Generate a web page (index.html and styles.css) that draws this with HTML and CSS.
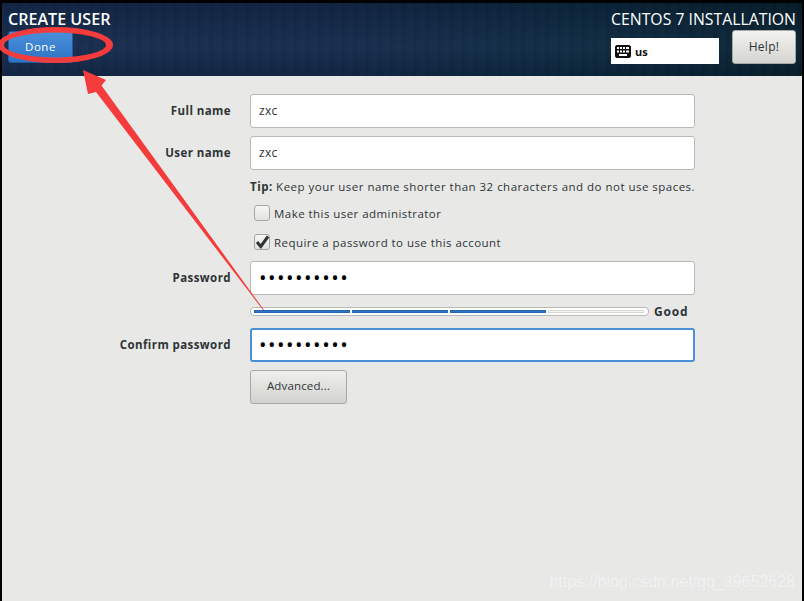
FILE: index.html
```html
<!DOCTYPE html>
<html lang="en">
<head>
<meta charset="utf-8">
<title>Create User</title>
<link rel="stylesheet" href="styles.css">
</head>
<body>
<div class="frame">
  <header class="top">
    <div class="top-left">
      <h1 class="title">CREATE USER</h1>
      <button class="done" type="button">Done</button>
    </div>
    <div class="top-right">
      <div class="product">CENTOS 7 INSTALLATION</div>
      <div class="top-controls">
        <div class="kb">
          <svg class="kb-icon" width="16" height="13" viewBox="0 0 16 13">
            <rect x="0.5" y="0.5" width="15" height="12" rx="1.5" fill="#111" stroke="#111"/>
            <g fill="#fff">
              <rect x="2" y="2" width="2" height="2"/><rect x="5" y="2" width="2" height="2"/><rect x="8" y="2" width="2" height="2"/><rect x="11" y="2" width="3" height="2"/>
              <rect x="2" y="5.500" width="2" height="2"/><rect x="5" y="5.500" width="2" height="2"/><rect x="8" y="5.500" width="2" height="2"/><rect x="11" y="5.500" width="3" height="2"/>
              <rect x="4" y="9" width="8" height="2"/>
            </g>
          </svg>
          <span class="kb-label">us</span>
        </div>
        <button class="help" type="button">Help!</button>
      </div>
    </div>
  </header>
  <main class="form">
    <label class="lbl row-a">Full name</label>
    <div class="field row-a">zxc</div>
    <label class="lbl row-b">User name</label>
    <div class="field row-b">zxc</div>
    <p class="tip"><b>Tip:</b> Keep your user name shorter than 32 characters and do not use spaces.</p>
    <div class="check check-a"><span class="box"></span><span>Make this user administrator</span></div>
    <div class="check check-b">
      <span class="box"><svg width="16" height="16" viewBox="0 0 16 16"><path d="M3 8 L6.800 12.500 L14 2.500" fill="none" stroke="#2e3436" stroke-width="3"/></svg></span>
      <span>Require a password to use this account</span>
    </div>
    <label class="lbl row-c">Password</label>
    <div class="field dots row-c">••••••••••</div>
    <div class="meter-row">
      <div class="meter"><i class="seg on"></i><i class="seg on"></i><i class="seg on"></i><i class="seg"></i></div>
      <span class="good">Good</span>
    </div>
    <label class="lbl row-d">Confirm password</label>
    <div class="field dots focus row-d">••••••••••</div>
    <button class="advanced" type="button">Advanced...</button>
  </main>
  <div class="watermark">https://blog.csdn.net/qq_39652628</div>
  <svg class="markup" width="804" height="601" viewBox="0 0 804 601">
    <path fill-rule="evenodd" fill="#f53c3c" d="M-2 45 A57.500 18 0 1 1 113 45 A57.500 18 0 1 1 -2 45 Z M4 45 A51 12.500 0 1 0 106 45 A51 12.500 0 1 0 4 45 Z"/>
    <path d="M83 70 L106 80 L101.500 85.500 L264 310 L263 310 L96 92 L88 94 Z" fill="#f53c3c"/>
  </svg>
</div>
</body>
</html>
```
FILE: styles.css
```css
* { box-sizing: border-box; }
html, body { margin: 0; padding: 0; height: 100%; overflow: hidden; }
body { background: #000; font-family: "Open Sans", "Noto Sans", sans-serif; }
.frame {
  position: relative;
  width: 804px;
  height: 601px;
  padding: 3px 2px 0;
  background: #000;
  display: flex;
  flex-direction: column;
}
.top {
  height: 73px;
  flex: none;
  display: flex;
  justify-content: space-between;
  padding: 0 6px;
  color: #fff;
  background:
    repeating-linear-gradient(90deg, rgba(255,255,255,.01) 0 3px, rgba(0,0,0,.02) 3px 7px, rgba(255,255,255,.006) 7px 12px),
    linear-gradient(180deg, rgba(0,0,0,.12), rgba(255,255,255,.03) 60%, rgba(0,0,0,.1)),
    linear-gradient(90deg, #13294b 0%, #12284a 40%, #0b2740 70%, #07202f 100%);
}
.top-left { width: 200px; }
.title {
  margin: 7px 0 0;
  font-size: 16.100px;
  line-height: 18px;
  font-weight: 600;
  white-space: nowrap;
}
.done {
  display: block;
  width: 65px;
  height: 32px;
  margin-top: 3px;
  padding: 0 0 2px;
  border: 1px solid #1d5ea8;
  border-radius: 3px;
  color: #fff;
  font: 400 11.500px "Open Sans", sans-serif;
  letter-spacing: .5px;
  background: linear-gradient(180deg, #4a8fdb, #2f74c4);
}
.top-right { width: 240px; display: flex; flex-direction: column; align-items: flex-end; }
.product {
  margin-top: 7px;
  font-size: 15.800px;
  line-height: 18px;
  white-space: nowrap;
}
.top-controls { display: flex; align-items: flex-end; gap: 13px; margin-top: 2px; }
.kb {
  width: 108px;
  height: 26px;
  background: #fff;
  color: #111;
  display: flex;
  align-items: center;
  padding-left: 4px;
  gap: 4px;
}
.kb-label { font-size: 11px; font-weight: 700; }
.help {
  width: 64px;
  height: 34px;
  padding: 0 0 2px;
  border: 1px solid #a8a8a4;
  border-radius: 3px;
  color: #2e3436;
  font: 400 12px "Open Sans", sans-serif;
  letter-spacing: .3px;
  background: linear-gradient(180deg, #f2f2f0, #d4d4d0);
}
.form {
  flex: 1;
  background: #e8e8e7;
  display: grid;
  grid-template-columns: 229px 445px;
  column-gap: 19px;
  grid-template-rows: 34px 8px 34px 9px 16px 10px 16px 13px 16px 11px 34px 12px 9px 12px 34px 8px 34px;
  align-content: start;
  padding-top: 18px;
  color: #2e3436;
  font-size: 11.500px;
}
.lbl {
  grid-column: 1;
  justify-self: end;
  align-self: center;
  padding-bottom: 2px;
  font-weight: 700;
  letter-spacing: .42px;
  white-space: nowrap;
}
.field {
  grid-column: 2;
  background: #fff;
  border: 1px solid #b8b8b4;
  border-radius: 3px;
  display: flex;
  align-items: center;
  padding: 0 0 2px 8px;
  color: #2e3436;
  font-size: 12px;
  letter-spacing: .3px;
}
.row-a { grid-row: 1; }
.row-b { grid-row: 3; }
.row-c { grid-row: 11; }
.row-d { grid-row: 15; }
.tip {
  grid-column: 2;
  grid-row: 5;
  margin: 0;
  white-space: nowrap;
  line-height: 16px;
  letter-spacing: .48px;
}
.check {
  grid-column: 2;
  display: flex;
  align-items: center;
  gap: 4px;
  margin-left: 4px;
  letter-spacing: .45px;
  white-space: nowrap;
}
.check-a { grid-row: 7; }
.check-b { grid-row: 9; }
.box {
  width: 16px;
  height: 16px;
  border: 1px solid #a5a5a1;
  border-radius: 3px;
  background: linear-gradient(180deg, #f6f6f5, #e2e2e0);
  display: block;
  flex: none;
}
.box svg { display: block; margin: -1px; }
.dots { font-size: 20px; letter-spacing: 1.500px; color: #000; }
.meter-row {
  grid-column: 2;
  grid-row: 13;
  display: flex;
  align-items: center;
  gap: 5px;
}
.meter {
  width: 399px;
  height: 9px;
  border: 1px solid #b8b8b4;
  border-radius: 4px;
  background: #fff;
  padding: 2px 4px 2px 3px;
  display: flex;
  gap: 2px;
}
.seg { flex: 1; background: #f6f6f4; border: 1px solid #d8d8d5; }
.seg.on { background: #2f74c4; border-color: #2566b0; }
.good { font-size: 12px; font-weight: 700; letter-spacing: .8px; padding-bottom: 1px; }
.focus { border: 2px solid #4a90d9; padding-left: 7px; }
.advanced {
  grid-column: 2;
  grid-row: 17;
  justify-self: start;
  width: 97px;
  height: 34px;
  padding: 0 0 3px;
  border: 1px solid #a8a8a4;
  border-radius: 3px;
  color: #2e3436;
  font: 400 11.500px "Open Sans", sans-serif;
  letter-spacing: .15px;
  background: linear-gradient(180deg, #efefed, #d2d2ce);
}
.watermark {
  position: absolute;
  right: 9px;
  top: 573px;
  font: 400 16px "Liberation Sans", sans-serif;
  color: #f3f3f2;
  text-shadow: 0 0 1px #dfdfdd;
  white-space: nowrap;
}
.markup { position: absolute; left: 0; top: 0; pointer-events: none; }
```
